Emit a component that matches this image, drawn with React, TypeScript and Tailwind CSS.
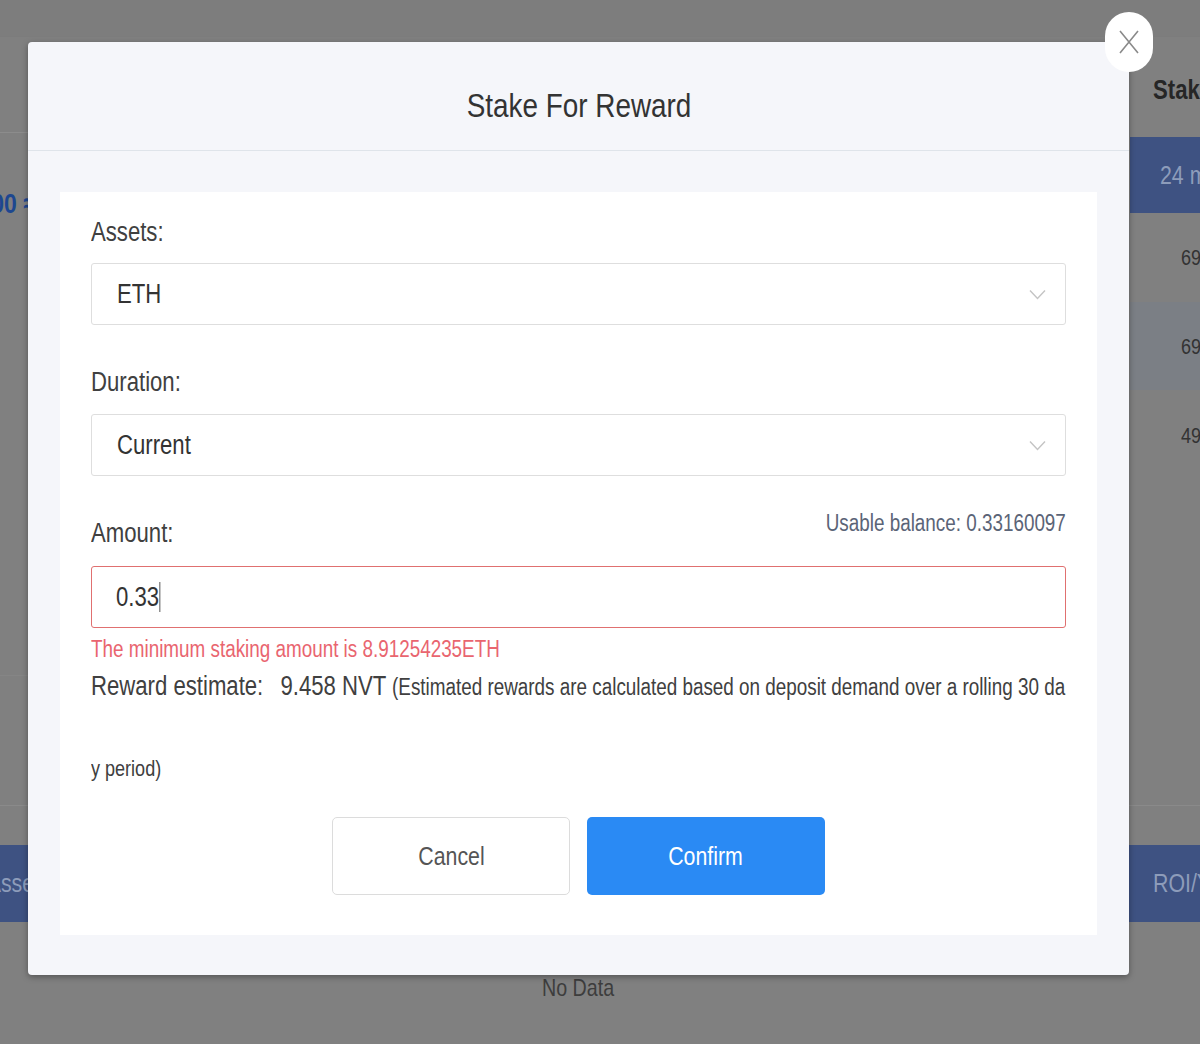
import React from 'react'

// the reference type is set in a condensed Helvetica; squeeze Liberation Sans to match
const sq = 'scale-x-[0.82] whitespace-nowrap'

const Chevron = () => (
    <svg width="17" height="11" viewBox="0 0 17 11" fill="none" className="shrink-0">
        <path d="M1 1.5 L8.5 9.5 L16 1.5" stroke="#c4c4c4" strokeWidth="1.4" />
    </svg>
)

const SelectBox = ({ value }: { value: string }) => (
    <div className="flex items-center justify-between h-[62px] pl-[25px] pr-[19px] bg-white border border-[#dedede] rounded-[3px]">
        <span className={`${sq} origin-left text-[27px] text-[#333]`}>{value}</span>
        <Chevron />
    </div>
)

const App = () => {
    return (
        <div className="relative w-[1200px] h-[1044px] overflow-hidden bg-[#808080] font-['Liberation_Sans',Arial,sans-serif]">

            {/* page behind the overlay */}
            <div className="flex flex-col h-full">
                <div className="h-[37px] border-b border-[#7c7c7c] bg-[#7d7d7d]" />
                <div className="grid grid-cols-[600px_1fr] h-[769px] border-b border-[#8a8a8a]">
                    <div className="flex flex-col">
                        <div className="h-[96px] border-b border-[#8c8c8c]" />
                        <div className="h-[543px] pt-[50px] border-b border-[#858585]">
                            <div className="w-[36px] flex justify-end">
                                <span className={`${sq} origin-right text-[28px] font-bold text-[#1d4790]`}>100.00 ≈</span>
                            </div>
                        </div>
                    </div>
                    <div className="flex flex-col pl-[530px]">
                        <div className="h-[100px] pl-[23px] pt-[33px]">
                            <span className={`block ${sq} origin-left text-[27px] font-bold text-[#262626]`}>Staking period</span>
                        </div>
                        <div className="h-[76px] pl-[30px] flex items-center bg-[#3e5282]">
                            <span className={`${sq} origin-left text-[26px] text-[#8d9cba]`}>24 months</span>
                        </div>
                        <div className="h-[89px] pl-[51px] flex items-center text-[22px] text-[#333]">
                            <span className={`${sq} origin-left`}>69%</span>
                        </div>
                        <div className="h-[88px] pl-[51px] flex items-center bg-[#7b7f85] text-[22px] text-[#333]">
                            <span className={`${sq} origin-left`}>69%</span>
                        </div>
                        <div className="h-[90px] pl-[51px] flex items-center text-[22px] text-[#333]">
                            <span className={`${sq} origin-left`}>49%</span>
                        </div>
                    </div>
                </div>
                <div className="h-[39px]" />
                <div className="h-[77px] flex items-center bg-[#3e5282] text-[26px] text-[#8d9cba]">
                    <div className="w-[40px] shrink-0 flex justify-end">
                        <span className={`${sq} origin-right`}>Asset</span>
                    </div>
                    <span className={`ml-[1113px] ${sq} origin-left`}>ROI/Year</span>
                </div>
                <div className="pt-[48px] pr-[44px] flex justify-center">
                    <span className={`${sq} text-[24px] text-[#3d3d3d]`}>No Data</span>
                </div>
            </div>

            {/* modal */}
            <div className="absolute left-[28px] top-[42px] w-[1101px] h-[933px] rounded-[4px] bg-[#f5f6fa] shadow-[0_2px_6px_rgba(0,0,0,0.35)] flex flex-col">
                <div className="h-[109px] pt-[18px] flex items-center justify-center border-b border-[#dfe4ea]">
                    <h2 className={`${sq} text-[34px] text-[#333]`}>Stake For Reward</h2>
                </div>

                <div className="mx-[32px] mt-[41px] bg-white px-[31px] pt-[22px] pb-[40px] flex flex-col">
                    <label className={`${sq} origin-left leading-[36px] text-[27px] text-[#404040]`}>Assets:</label>
                    <div className="mt-[13px]">
                        <SelectBox value="ETH" />
                    </div>

                    <label className={`mt-[39px] ${sq} origin-left leading-[36px] text-[27px] text-[#404040]`}>Duration:</label>
                    <div className="mt-[14px]">
                        <SelectBox value="Current" />
                    </div>

                    <div className="mt-[29px] h-[46px] flex justify-between">
                        <label className={`self-end ${sq} origin-left leading-[36px] text-[27px] text-[#404040]`}>Amount:</label>
                        <span className={`pt-[4px] ${sq} origin-right leading-[28px] text-[23px] text-[#5b6477]`}>Usable balance: 0.33160097</span>
                    </div>

                    <div className="mt-[15px] h-[62px] flex items-center pl-[24px] border border-[#e07070] rounded-[3px]">
                        <span className={`flex items-center ${sq} origin-left`}>
                            <span className="text-[27px] text-[#333]">0.33</span>
                            <span className="inline-block w-px h-[30px] bg-[#333]" />
                        </span>
                    </div>

                    <p className={`mt-[7px] ${sq} origin-left leading-[28px] text-[23px] text-[#e9656f]`}>
                        The minimum staking amount is 8.91254235ETH
                    </p>

                    <div className={`mt-[5px] flex items-baseline ${sq} origin-left leading-[36px] text-[#404040]`}>
                        <span className="text-[27px]">Reward estimate:</span>
                        <span className="ml-[21px] text-[27px]">9.458 NVT</span>
                        <span className="ml-[7px] text-[23px]">(Estimated rewards are calculated based on deposit demand over a rolling 30 da</span>
                    </div>
                    <p className={`mt-[50px] ${sq} origin-left leading-[28px] text-[22px] text-[#404040]`}>y period)</p>

                    <div className="mt-[34px] flex justify-center gap-[17px]">
                        <button className="w-[238px] h-[78px] bg-white border border-[#dcdcdc] rounded-[5px] text-[26px] text-[#555]">
                            <span className={`inline-block ${sq}`}>Cancel</span>
                        </button>
                        <button className="w-[238px] h-[78px] bg-[#2a8af4] rounded-[5px] text-[26px] text-white">
                            <span className={`inline-block ${sq}`}>Confirm</span>
                        </button>
                    </div>
                </div>
            </div>

            {/* close button on the modal corner */}
            <button className="absolute left-[1105px] top-[12px] w-[48px] h-[60px] rounded-full bg-white flex items-center justify-center">
                <svg width="20" height="24" viewBox="0 0 20 24" fill="none">
                    <path d="M1 1 L19 23 M19 1 L1 23" stroke="#8a8a8a" strokeWidth="1.6" />
                </svg>
            </button>
        </div>
    )
}

export default App
